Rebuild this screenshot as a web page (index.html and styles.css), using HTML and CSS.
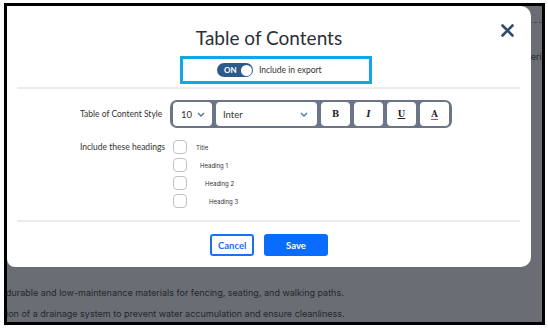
FILE: index.html
```html
<!doctype html>
<html>
<head>
    <title>Table of Contents</title>
    <meta name="viewport" content="width=device-width, initial-scale=1.0">
    <link rel="stylesheet" href="styles.css">
</head>
<body>

    <div class="frame">
        <!-- page behind the overlay -->
        <div class="page">
            <div class="page-rule"></div>
            <p class="page-note">materials</p>
            <div class="page-text">
                <p>durable and low-maintenance materials for fencing, seating, and walking paths.</p>
                <p>ion of a drainage system to prevent water accumulation and ensure cleanliness.</p>
            </div>
        </div>

        <div class="modal">
            <button class="close" aria-label="Close">
                <svg width="13" height="13" viewBox="0 0 13 13">
                    <path d="M1.5 1.5 L11.5 11.5 M11.5 1.5 L1.5 11.5" stroke="#2f4a6d" stroke-width="2.6" stroke-linecap="round"/>
                </svg>
            </button>

            <h2 class="title">Table of Contents</h2>

            <div class="export-box">
                <div class="toggle">
                    <span>ON</span>
                    <span class="knob"></span>
                </div>
                <span class="export-label">Include in export</span>
            </div>

            <div class="rule"></div>

            <div class="form">
                <div class="label label-mid">Table of Content Style</div>
                <div class="toolbar">
                    <div class="tool select size">
                        <span>10</span>
                        <svg width="8" height="5" viewBox="0 0 8 5"><polyline points="1,1 4,4 7,1" fill="none" stroke="#4d6f9e" stroke-width="1.3"/></svg>
                    </div>
                    <div class="tool select font">
                        <span>Inter</span>
                        <svg width="8" height="5" viewBox="0 0 8 5"><polyline points="1,1 4,4 7,1" fill="none" stroke="#4d6f9e" stroke-width="1.3"/></svg>
                    </div>
                    <div class="tool glyph">B</div>
                    <div class="tool glyph italic">I</div>
                    <div class="tool glyph under">U</div>
                    <div class="tool glyph color"><span>A</span></div>
                </div>

                <div class="label">Include these headings</div>
                <div class="headings">
                    <label class="heading"><span class="check"></span><span class="h-text">Title</span></label>
                    <label class="heading lvl1"><span class="check"></span><span class="h-text">Heading 1</span></label>
                    <label class="heading lvl2"><span class="check"></span><span class="h-text">Heading 2</span></label>
                    <label class="heading lvl3"><span class="check"></span><span class="h-text">Heading 3</span></label>
                </div>
            </div>

            <div class="rule rule-bottom"></div>

            <div class="actions">
                <button class="btn cancel">Cancel</button>
                <button class="btn save">Save</button>
            </div>
        </div>
    </div>

</body>
</html>
```

FILE: styles.css
```css
body {
    margin: 0;
    background-color: #fff;
    font-family: 'Lato', 'Noto Sans', sans-serif;
}
.frame {
    position: relative;
    margin: 3px 0 0 4px;
    width: 541px;
    height: 322px;
    box-sizing: border-box;
    border: 3px solid #000;
    background-color: #6a6d74;
    overflow: hidden;
}

/* page behind the overlay */
.page {
    font-family: 'Inter', sans-serif;
    color: #25282d;
    font-size: 9px;
}
.page-rule {
    margin-top: 16px;
    border-top: 1px dashed #4a4d53;
}
.page-note {
    margin: 27px 0 0 508px;
    line-height: 14px;
    white-space: nowrap;
}
.page-text {
    margin-top: 218px;
}
.page-text p {
    margin: 0 0 0 -1px;
    line-height: 21px;
    white-space: nowrap;
}

/* modal */
.modal {
    position: absolute;
    left: 0;
    top: 0;
    width: 524px;
    height: 261px;
    box-sizing: border-box;
    padding-top: 20px;
    background-color: #fff;
    border-radius: 0 10px 10px 8px;
}
.close {
    position: absolute;
    right: 17px;
    top: 18px;
    padding: 0;
    border: none;
    background: none;
    line-height: 0;
    cursor: pointer;
}
.title {
    margin: 0;
    text-align: center;
    font-size: 19px;
    line-height: 24px;
    font-weight: 400;
    color: #2b2f36;
}
.export-box {
    display: flex;
    align-items: center;
    gap: 6px;
    margin: 6px 0 0 173px;
    width: 192px;
    height: 28px;
    box-sizing: border-box;
    padding-left: 34px;
    border: 3px solid #12a6e6;
}
.toggle {
    display: flex;
    align-items: center;
    justify-content: space-between;
    width: 36px;
    height: 14px;
    box-sizing: border-box;
    padding: 0 1.5px 0 7px;
    border-radius: 7px;
    background-color: #2d5a8c;
    color: #fff;
    font-size: 8px;
    font-weight: 700;
}
.knob {
    width: 11px;
    height: 11px;
    border-radius: 50%;
    background-color: #fff;
}
.export-label {
    font-size: 8.5px;
    color: #333;
}
.rule {
    margin: 3px 11px 0 10px;
    height: 2px;
    background-color: #ececec;
}
.rule-bottom {
    margin-top: 12px;
}

.form {
    display: grid;
    grid-template-columns: 90px auto;
    row-gap: 12px;
    margin: 11px 0 0 73px;
}
.label {
    font-size: 8.5px;
    line-height: 14px;
    color: #333;
}
.label-mid {
    align-self: center;
}
.toolbar {
    display: flex;
    gap: 4px;
    width: max-content;
    padding: 2px 3px;
    border-radius: 7px;
    background-color: #6b7585;
}
.tool {
    display: flex;
    align-items: center;
    height: 24px;
    width: 29px;
    box-sizing: border-box;
    border-radius: 4px;
    background-color: #fff;
    font-size: 9.5px;
    color: #333;
}
.select {
    justify-content: space-between;
}
.size {
    width: 39px;
    padding: 0 7px 0 8px;
}
.font {
    width: 101px;
    padding: 0 9px 0 7px;
}
.glyph {
    justify-content: center;
    font-family: 'DejaVu Serif', serif;
    font-weight: 700;
    font-size: 8.5px;
    color: #222;
}
.italic {
    font-style: italic;
}
.under {
    text-decoration: underline;
}
.color span {
    line-height: 10px;
    border-bottom: 1.5px solid #d6339a;
}

.headings {
    display: flex;
    flex-direction: column;
    gap: 4px;
    margin-left: 3px;
}
.heading {
    display: flex;
    align-items: center;
}
.check {
    width: 14px;
    height: 14px;
    box-sizing: border-box;
    border: 1px solid #c2c2c2;
    border-radius: 4px;
}
.h-text {
    margin-left: 9px;
    font-family: 'Inter', sans-serif;
    font-size: 6px;
    color: #333;
}
.lvl1 .h-text { margin-left: 13px; }
.lvl2 .h-text { margin-left: 18px; }
.lvl3 .h-text { margin-left: 22px; }

.actions {
    display: flex;
    justify-content: center;
    gap: 10px;
    margin-top: 12px;
}
.btn {
    height: 22px;
    border-radius: 3px;
    font-family: 'Lato', sans-serif;
    font-size: 9.5px;
    font-weight: 700;
    cursor: pointer;
}
.cancel {
    width: 44px;
    border: 2px solid #1a72f2;
    background-color: #fff;
    color: #1a6ef5;
}
.save {
    width: 64px;
    border: none;
    background-color: #0a6cff;
    color: #fff;
}
```
